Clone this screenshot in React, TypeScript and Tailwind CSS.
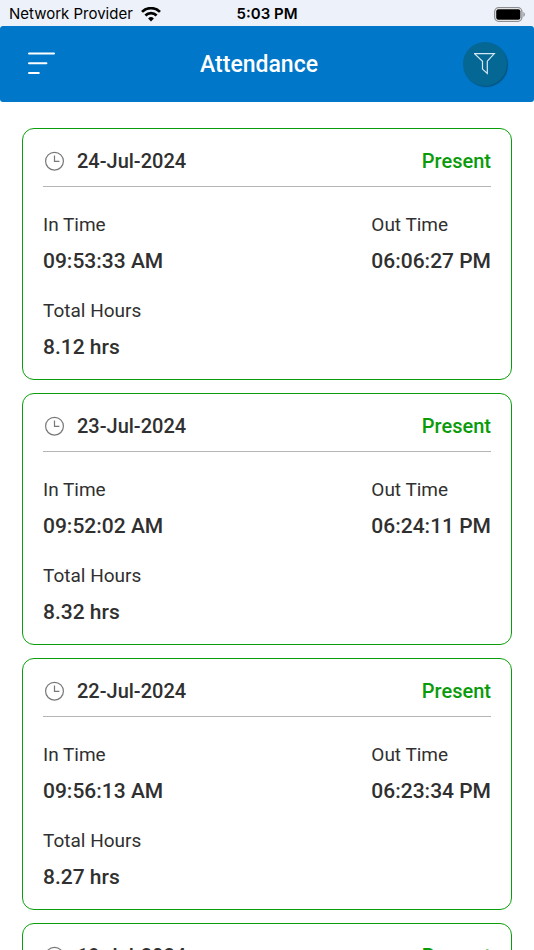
import React from 'react';

interface AttendanceRecord {
    date: string;
    status: string;
    inTime: string;
    outTime: string;
    totalHours: string;
}

const records: AttendanceRecord[] = [
    { date: '24-Jul-2024', status: 'Present', inTime: '09:53:33 AM', outTime: '06:06:27 PM', totalHours: '8.12 hrs' },
    { date: '23-Jul-2024', status: 'Present', inTime: '09:52:02 AM', outTime: '06:24:11 PM', totalHours: '8.32 hrs' },
    { date: '22-Jul-2024', status: 'Present', inTime: '09:56:13 AM', outTime: '06:23:34 PM', totalHours: '8.27 hrs' },
    { date: '19-Jul-2024', status: 'Present', inTime: '09:51:40 AM', outTime: '06:20:15 PM', totalHours: '8.28 hrs' },
];

const WifiIcon = () => (
    <svg width="20" height="15" viewBox="0 0 20 15" fill="none" stroke="black" strokeWidth="2.7" aria-hidden="true">
        <path d="M1 4.9a12.7 12.7 0 0 1 18 0" />
        <path d="M4.4 8.5a7.9 7.9 0 0 1 11.2 0" />
        <path d="M10 14.4l-2.9-2.9a4.1 4.1 0 0 1 5.8 0z" fill="black" stroke="none" />
    </svg>
);

const BatteryIcon = () => (
    <svg width="31" height="15" viewBox="0 0 31 15" aria-hidden="true">
        <rect x="0.7" y="0.7" width="27.2" height="13.6" rx="4" fill="white" stroke="#8b8d91" strokeWidth="1.3" />
        <rect x="2.2" y="2.2" width="24.2" height="10.6" rx="2" fill="black" />
        <path d="M29.4 5v5c1.9-.8 1.9-4.2 0-5z" fill="#8b8d91" />
    </svg>
);

const ClockIcon = () => (
    <svg width="20" height="20" viewBox="0 0 20 20" fill="none" stroke="#777777" strokeWidth="1.2" aria-hidden="true">
        <circle cx="9.5" cy="10.2" r="8.9" />
        <path d="M9.5 4.4V10.4H14.4" />
    </svg>
);

const FilterIcon = () => (
    <svg width="22" height="22" viewBox="0 0 22 22" fill="none" stroke="#d5e8f2" strokeWidth="1.2" aria-hidden="true">
        <path d="M0.5 0.6h19.8l-7 7.6v12.2l-4.8-4.3V8.2z" />
    </svg>
);

const Field = ({ label, value }: { label: string; value: string }) => (
    <div className="flex flex-col gap-3">
        <dt className="text-[19px] leading-6">{label}</dt>
        <dd className="text-[21px] leading-6 font-medium">{value}</dd>
    </div>
);

const AttendanceCard = ({ record }: { record: AttendanceRecord }) => (
    <article className="rounded-xl border border-[#0a9e0a] px-5 pt-4 pb-5 text-[#303030]">
        <div className="flex items-center justify-between border-b border-[#b5b5b5] pb-[9px] text-xl leading-8 font-medium">
            <h2 className="flex items-center gap-3 pl-[2px]">
                <ClockIcon />
                {record.date}
            </h2>
            <span className="text-[#0a9b0a]">{record.status}</span>
        </div>
        <dl className="mt-[26px] flex flex-col gap-[26px]">
            <div className="flex justify-between">
                <Field label="In Time" value={record.inTime} />
                <Field label="Out Time" value={record.outTime} />
            </div>
            <Field label="Total Hours" value={record.totalHours} />
        </dl>
    </article>
);

const App: React.FC = () => {
    return (
        <div className="flex h-screen flex-col bg-white font-[Roboto,sans-serif]">
            <div className="grid h-[26px] shrink-0 grid-cols-3 items-center bg-[#edf1fa] px-[9px] pt-[2px] font-[Inter,sans-serif] text-[15px] leading-6 text-black">
                <div className="flex items-center gap-2 whitespace-nowrap">
                    Network Provider
                    <WifiIcon />
                </div>
                <span className="text-center font-semibold">5:03 PM</span>
                <span className="flex justify-end">
                    <BatteryIcon />
                </span>
            </div>

            <header className="flex h-[76px] shrink-0 items-center justify-between rounded-[3px] bg-[#0077c8] px-[27px] text-white">
                <button type="button" aria-label="Menu">
                    <svg width="28" height="24" viewBox="0 0 28 24" stroke="white" strokeWidth="2" strokeLinecap="round" aria-hidden="true">
                        <path d="M2 1.4h25M2 11.3h17.4M2 21h9.8" />
                    </svg>
                </button>
                <h1 className="pt-[2px] text-[23px] leading-8 font-medium">Attendance</h1>
                <button
                    type="button"
                    aria-label="Filter"
                    className="flex size-11 items-center justify-center rounded-full bg-[#056794] shadow-[1px_1px_1px_#03517f]"
                >
                    <FilterIcon />
                </button>
            </header>

            <main className="flex flex-1 flex-col gap-[13px] overflow-y-auto px-[22px] pt-[26px] pb-4 [scrollbar-width:none]">
                {records.map((record) => (
                    <AttendanceCard key={record.date} record={record} />
                ))}
            </main>
        </div>
    );
};

export default App;
